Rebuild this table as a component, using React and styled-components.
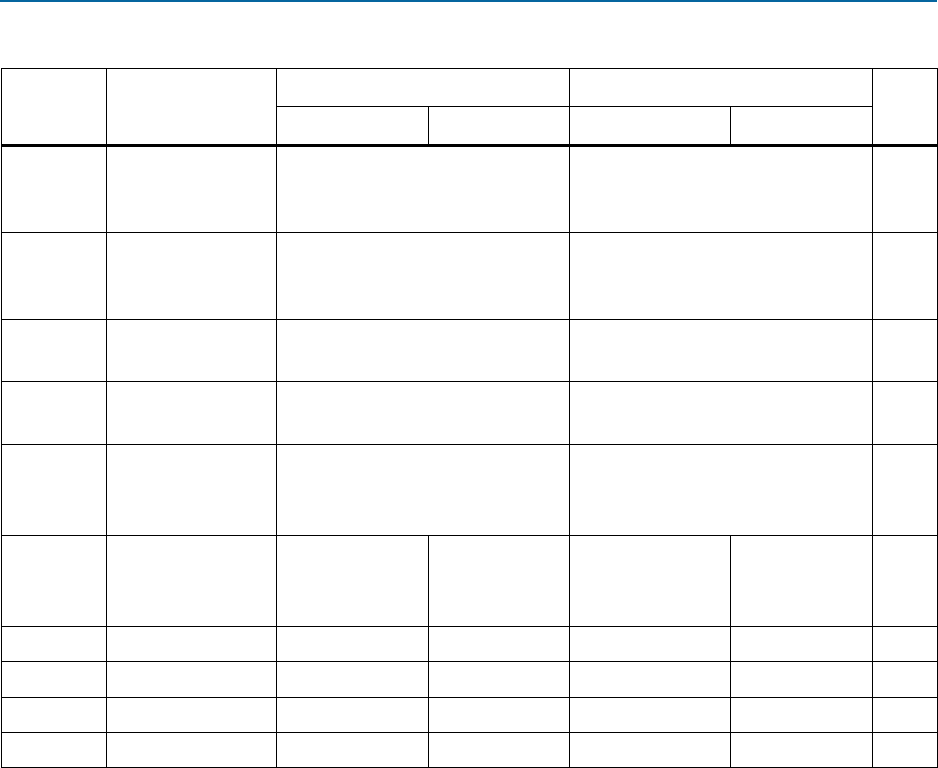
import React from "react";
import styled, { createGlobalStyle } from "styled-components";

const GlobalStyle = createGlobalStyle`
  html, body {
    margin: 0;
    padding: 0;
    background: #ffffff;
    font-family: "Liberation Sans", Arial, sans-serif;
  }
`;

const columns = [105, 170, 152, 141, 161, 142, 65];

const mergedRows = [87, 87, 62, 63, 91];
const splitRows = [91, 35, 36, 35, 35];

export default function App() {
  return (
    <>
      <GlobalStyle />
      <Page>
        <TopRule />
        <Sheet>
          <colgroup>
            {columns.map((w, i) => (
              <col key={i} style={{ width: w }} />
            ))}
          </colgroup>
          <thead>
            <Row $h={38}>
              <HeadCell rowSpan={2} $last />
              <HeadCell rowSpan={2} $last />
              <HeadCell colSpan={2} />
              <HeadCell colSpan={2} />
              <HeadCell rowSpan={2} $last />
            </Row>
            <Row $h={39}>
              <HeadCell $last />
              <HeadCell $last />
              <HeadCell $last />
              <HeadCell $last />
            </Row>
          </thead>
          <tbody>
            {mergedRows.map((h, i) => (
              <Row key={"m" + i} $h={h}>
                <Cell />
                <Cell />
                <Cell colSpan={2} />
                <Cell colSpan={2} />
                <Cell />
              </Row>
            ))}
            {splitRows.map((h, i) => (
              <Row key={"s" + i} $h={h}>
                {columns.map((_, j) => (
                  <Cell key={j} />
                ))}
              </Row>
            ))}
          </tbody>
        </Sheet>
      </Page>
    </>
  );
}

const Page = styled.div`
  width: 938px;
  height: 768px;
  overflow: hidden;
`;

const TopRule = styled.div`
  width: 937px;
  height: 2px;
  background: #05659f;
  margin-bottom: 66px;
`;

const Sheet = styled.table`
  border-collapse: collapse;
  table-layout: fixed;
  width: 936px;
  margin-left: 1px;
`;

const Row = styled.tr`
  height: ${(p) => p.$h}px;
`;

const HeadCell = styled.th`
  border: 1px solid #000;
  border-bottom: ${(p) => (p.$last ? "3px solid #000" : "1px solid #000")};
  padding: 0;
`;

const Cell = styled.td`
  border: 1px solid #000;
  padding: 0;
`;
